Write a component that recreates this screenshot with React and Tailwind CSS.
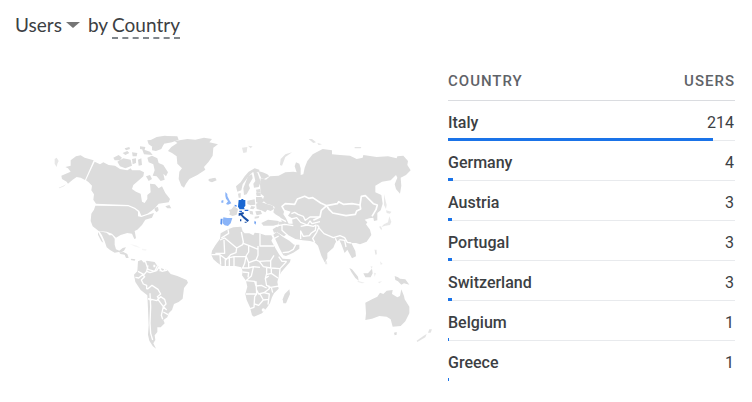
import React from "react";

const rows = [
  { country: "Italy", users: 214 },
  { country: "Germany", users: 4 },
  { country: "Austria", users: 3 },
  { country: "Portugal", users: 3 },
  { country: "Switzerland", users: 3 },
  { country: "Belgium", users: 1 },
  { country: "Greece", users: 1 },
];
const total = 232;

function WorldMap() {
  const line = { fill: "none", stroke: "#fff", strokeWidth: 4, strokeLinejoin: "round" };
  return (
    <svg viewBox="15 110 418 250" className="block w-full" role="img" aria-label="Users by country map" fill="#dcdcdc">
      {/* North America */}
      <g transform="translate(40 125) scale(.33333)">
        <path d="M92 106L108 94 122 91 134 98 161 106 135 165 122 158 110 156 98 164 84 176 80 170 66 162 64 152 78 146 92 140 84 130 76 126 92 122Z" />
        <path d="M44 102L50 98 56 108 52 116 50 126 44 116ZM56 188L70 182 78 178 72 184 58 190Z" opacity=".7" />
        <path d="M164 110L180 118 190 112 206 120 225 122 240 132 262 136 272 130 276 136 300 136 312 142 310 154 294 168 280 180 276 192 288 200 302 206 306 230 314 234 322 222 322 210 332 202 330 176 345 178 356 190 366 184 376 204 390 222 386 232 356 236 344 250 334 258 322 266 304 272 298 258 285 248 265 240 168 236 160 224 162 208 154 196 156 182 146 172 138 166Z" />
        <path d="M166 242L265 244 284 252 294 260 294 274 304 276 322 270 342 264 336 278 316 284 306 300 292 314 284 318 288 340 283 342 276 326 262 324 242 330 228 338 216 326 200 320 176 318 158 304 152 288 154 266 162 254Z" />
        <path d="M344 248L354 246 356 256 350 262 344 256ZM376 244L388 240 394 250 382 250Z" />
        <path d="M220 98L236 90 246 98 240 106 224 106ZM232 110L250 100 272 104 276 122 256 130 240 124ZM248 84L262 78 268 84 256 90ZM254 70L268 66 270 72 258 76ZM276 82L292 84 290 94 278 94ZM276 102L288 100 288 114 278 118ZM294 104L304 100 306 120 296 122ZM306 72L330 80 338 90 312 88ZM322 46L338 44 348 62 338 66 326 58ZM300 64L316 66 314 74 300 72Z" />
        <path d="M336 66L352 52 342 44 374 34 412 34 416 44 396 52 372 56 364 72 348 78 336 76Z" />
        <path d="M322 98L336 92 352 100 356 114 370 120 384 142 378 154 370 146 374 164 362 168 350 154 338 152 344 136 340 118 326 112ZM318 154L330 150 336 162 326 168Z" />
      </g>
      {/* Mexico and Central America */}
      <g transform="translate(90 220) scale(.33333)">
        <path d="M28 34L50 38 58 46 66 46 74 56 74 74 78 88 88 92 98 84 108 82 102 92 92 98 86 96 74 98 60 90 50 82 44 64 36 46Z" />
        <path d="M24 36L34 54 40 68 34 64 24 44ZM88 98L100 96 112 102 116 114 108 114 104 104 92 102ZM124 116L136 118 134 122 122 120Z" />
        <path d="M120 72L138 76 152 84 136 80ZM156 86L170 88 168 92 156 90Z" opacity=".25" />
      </g>
      {/* South America */}
      <g transform="translate(120 230) scale(.33333)">
        <path d="M54 94L64 90 72 98 80 92 104 96 112 108 128 116 142 120 152 132 172 138 200 150 204 158 192 174 188 206 176 216 162 222 156 240 146 250 142 262 130 270 134 280 122 292 112 292 112 306 104 316 106 330 100 340 108 356 98 348 88 332 84 314 86 286 84 236 82 196 62 180 46 156 42 134 52 124Z" />
        <path {...line} d="M76 94L80 106 84 118 104 124 112 108M80 124L90 128 110 122 116 112 126 124 142 120M54 124L72 134 80 124 84 106M46 142L56 144 68 134 74 140 64 150 70 162 80 166 80 178M82 178L96 166 114 178 122 192 112 200 118 206M86 206L110 212 122 200 134 208 138 222 130 230 140 240M112 206L130 230 124 256 128 268M130 246L144 254M90 190L92 230 90 280 92 310 98 330M84 206L94 212M124 106L120 124M136 110L132 124" />
        <path d="M100 104h6v8h-6zM116 110h6v6h-6z" fill="#fff" />
      </g>
      {/* Greenland, Iceland, Scandinavia */}
      <g transform="translate(150 125) scale(.33333)">
        <path d="M54 78L64 66 82 54 74 48 112 42 136 44 162 38 186 42 178 52 204 58 190 68 188 92 176 110 162 126 166 134 142 150 118 162 108 176 102 188 94 182 86 162 88 140 96 130 82 116 80 94 66 84ZM176 162L196 158 200 166 186 172 176 168Z" />
        <path d="M4 44L20 36 44 32 82 36 74 44 44 50 38 62 18 66 8 58Z" />
        <path d="M276 68L292 66 290 82 280 84ZM294 62L308 64 302 70Z" opacity=".7" />
        <path d="M262 200L258 184 272 172 284 154 296 140 314 130 328 134 328 140 308 142 294 156 278 178 274 196Z" />
        <path d="M294 154L306 148 308 160 296 180 300 190 290 208 282 210 280 190ZM310 140L322 142 332 170 326 186 312 188 310 176 316 168Z" />
        <path d="M264 206L272 204 272 218 266 218ZM318 194L330 192 332 202 320 204Z" />
      </g>
      {/* Eurasia */}
      <g transform="translate(260 125) scale(.33333)">
        <path d="M-6 138L8 142 22 148 28 154 12 162 4 160Z" />
        <path d="M0 178L2 160 18 164 30 154 56 152 76 142 100 140 110 142 104 124 108 112 118 116 122 130 122 150 130 148 134 128 142 108 158 88 188 72 216 76 216 88 240 90 270 92 290 102 308 98 310 90 350 96 384 94 410 100 412 94 430 92 444 108 442 120 452 136 438 150 422 158 424 182 420 206 408 192 404 178 412 158 408 150 392 166 366 170 346 182 346 202 364 210 368 236 362 256 352 264 352 286 342 288 340 278 328 280 314 284 322 292 318 298 330 314 334 330 320 350 300 358 288 354 274 354 286 378 288 394 276 400 262 374 254 384 244 358 238 344 226 353 220 368 202 384 202 400 194 412 184 392 174 362 164 352 150 348 128 346 106 342 88 332 80 328 72 334 52 322 50 308 58 302 56 290 66 290 60 276 46 268 40 262 44 246 34 240 20 236 8 226 12 214 2 206Z" />
        <path d="M74 254L92 260 84 272 96 280 98 296 86 296 78 280 70 268Z" fill="#fff" />
        <path {...line} strokeWidth="5" d="M76 262L66 244 76 236 104 238 112 222 134 214 146 220 158 218 182 234 200 242 184 256 180 276 160 286M200 242L232 236 236 230 250 238 276 236 300 240 304 214 316 212 340 236 352 240 348 254 336 274M200 242L208 254 218 264 258 272 286 268 290 258 302 252 300 240" />
        <path {...line} d="M94 266L104 262 114 268 130 274 136 286 150 276 180 276M94 282L110 278 122 292 142 300 150 288 156 296 180 290M122 304L142 300 160 304 168 300 166 316 154 324 148 332 130 334 122 318 122 342M164 352L158 340 170 322 176 308 192 326 220 338 240 332 254 338 262 352 274 354M172 300L178 308M66 298L66 316 84 332M54 302L74 298 100 302M226 340L232 354M56 278L78 290M238 344L254 346 258 366" />
        <path d="M4 294L24 284 56 288 56 298 40 302 10 302Z" />
        <path d="M-12 236L2 230 18 236 38 242 42 252 32 258 22 254 16 262 4 256-10 252ZM-12 216L4 216 6 226-8 230Z" />
        <path d="M60 120L62 102 76 88 96 82 76 96 66 122ZM146 42L156 42 168 52 160 54ZM172 54L186 58 176 60ZM284 66L304 66 302 70 284 70Z" opacity=".8" />
        <path d="M372 208L380 240 378 252 372 240ZM378 256L394 260 390 266 380 264ZM388 274L394 290 390 300 376 302 364 306 372 298 384 292ZM360 302L366 310 364 316 358 306Z" opacity=".65" />
        <path d="M192 404L200 408 202 418 196 418ZM344 374L350 374 350 390 346 384Z" opacity=".6" />
      </g>
      {/* Africa and Arabia */}
      <g transform="translate(200 220) scale(.33333)">
        <path d="M84 28L100 22 124 20 128 34 134 40 148 40 160 46 164 38 178 40 196 46 214 46 218 54 214 62 226 84 238 104 248 116 272 118 270 126 244 156 236 170 232 186 236 206 222 220 216 232 210 250 200 264 186 280 162 290 156 286 150 262 140 240 136 222 142 200 138 182 126 166 128 154 124 142 106 138 84 138 66 138 52 128 40 118 34 104 36 92 46 76 60 56 62 40Z" />
        <path {...line} d="M84 28L86 40 64 54M60 60L74 54 110 84 128 74 130 66 124 36M130 70L146 76 174 88M180 40V78H222M174 78V106L168 120M146 76V96L138 108M72 60L74 100H46M110 84L108 98 92 104 76 122M100 110H138L134 130 128 144M102 110V138M88 110V138M76 116V138M34 104L60 104 76 116 102 110M60 104L62 134M168 120L178 124 212 122 222 106M146 128L168 120M138 108L146 128 146 142M126 144L146 144 160 140 180 142M178 124L190 140 212 144 240 146 260 124M212 122L212 144M236 110L246 124 260 124M240 146L238 170M214 144L214 160 234 174M200 142L200 160 196 176 200 198M160 142L154 168 138 182M128 156L146 158 144 172M138 182L164 184 168 198 184 196 200 204M168 184L170 222 138 222M198 164L214 160M200 196L212 202 238 198M170 210L176 222 192 218 208 206 206 196M170 222L164 230 162 262 150 266M164 252L176 256 190 240 180 222M190 240L206 238 208 222 192 218M206 238L204 254M214 202L218 218M198 174L206 168" />
        <circle cx="190" cy="270" r="5" fill="#fff" />
        <path d="M268 208L270 222 258 250 250 250 248 238 254 222Z" />
        <path d="M220 44L230 36 248 50 268 62 282 74 298 74 298 86 280 98 258 108 250 106 240 88 226 58Z" />
        <path {...line} d="M248 98L266 96 280 88 288 72M222 56L236 48" />
        <path d="M218 28L230 20 238 28 232 36 222 38Z" />
      </g>
      {/* Oceania and South-East Asia */}
      <g transform="translate(330 230) scale(.33333)">
        <path d="M106 218L126 208 142 200 150 188 160 192 170 182 188 180 186 192 202 202 210 198 214 178 222 198 224 208 238 230 238 250 226 274 212 288 188 290 182 268 170 260 148 258 126 266 106 270 108 250ZM192 308L200 306 200 314 194 316Z" />
        <path d="M298 298L306 298 302 308 294 308ZM280 318L290 312 286 322 262 336 260 332Z" opacity=".8" />
        <path d="M58 114L66 118 84 140 86 152 76 144 64 126ZM100 130L114 130 126 116 128 130 122 142 106 142ZM194 138L204 142 210 146 226 148 238 164 222 160 214 164 204 154 196 150Z" />
        <path d="M82 152L104 158 96 160 84 156ZM134 58L140 70 136 76ZM150 94L158 102 152 104ZM122 108L128 110 124 116ZM132 128L138 130 134 140ZM144 156L156 154 148 160Z" opacity=".5" />
      </g>
      {/* Europe */}
      <g transform="translate(200 160) scale(.33333)">
        <path d="M86 150L94 148 102 138 114 148 110 164 98 168 88 164 90 156ZM142 122L164 118 166 134 152 136 142 132ZM168 112L186 112 192 124 180 132 168 126ZM168 98L182 98 182 108 170 108ZM166 154L182 152 186 162 170 166ZM154 138L166 140 160 148 150 146ZM148 152L158 154 160 164 150 162ZM164 170L178 168 176 174 164 176ZM26 60L44 54 46 60 34 66Z" />
        <path d="M70 172L82 174 97 174 92 190 84 198 74 196 68 190ZM76 96L82 102 82 108 88 120 94 130 84 134 78 132 84 124 78 116 76 108ZM64 122L70 120 70 128 64 128Z" fill="#8ab4f8" />
        <path d="M62 176L68 176 66 194 61 192ZM104 134L110 136 110 140 104 139ZM164 182L168 186 166 194 163 190Z" fill="#5b93ee" />
        <path d="M116 120H124V117H130V120H136V138L132 142 134 148 119 148 114 140Z" fill="#1967d2" />
        <path d="M118 152H126V156H118ZM134 149H145V153H134Z" fill="#2b6bd6" />
        <path d="M116 160L130 156 132 161 127 164 136 172 147 181 143 186 130 175 122 166 116 168ZM134 185H140V188H134ZM120 178H124V184H120Z" fill="#174ea6" />
      </g>
    </svg>
  );
}

export default function App() {
  return (
    <main className="bg-white pl-[15px] pr-[17px] pb-5 text-[#3c4043] font-['Roboto',sans-serif]">
      <h1 className="flex h-[50px] items-center font-['Lato',sans-serif] text-[19px] leading-6 font-normal">
        <button type="button" className="flex items-center gap-1">
          Users
          <svg viewBox="0 0 14 6" className="h-[6px] w-[14px] fill-[#757575]" aria-hidden="true">
            <path d="M0 0h14L7 6z" />
          </svg>
        </button>
        <span className="mr-1 ml-2">by</span>
        <button type="button" className="mt-0.5 border-b-2 border-dashed border-[#80868b]">
          Country
        </button>
      </h1>
      <div className="flex gap-[15px]">
        <div className="min-w-0 flex-1 pt-[60px]">
          <WorldMap />
        </div>
        <table className="mt-[11px] w-[287px] shrink-0 self-start border-separate border-spacing-0">
          <thead>
            <tr className="h-10 text-[15px] tracking-[1px] text-[#5f6368]">
              <th scope="col" className="border-b border-[#dadce0] p-0 pt-0.5 text-left font-medium">COUNTRY</th>
              <th scope="col" className="border-b border-[#dadce0] p-0 pt-0.5 text-right font-medium">USERS</th>
            </tr>
          </thead>
          <tbody>
            {rows.map((r) => (
              <tr key={r.country} className="group relative h-10 text-base">
                <th scope="row" className="border-b border-[#e8eaed] p-0 pt-1 text-left font-medium group-last:border-transparent">
                  {r.country}
                  <span
                    className="absolute bottom-0 left-0 h-[3px] bg-[#1a73e8]"
                    style={{ width: `${(r.users / total) * 100}%` }}
                  />
                </th>
                <td className="border-b border-[#e8eaed] p-0 pt-1 pr-px text-right group-last:border-transparent">{r.users}</td>
              </tr>
            ))}
          </tbody>
        </table>
      </div>
    </main>
  );
}
